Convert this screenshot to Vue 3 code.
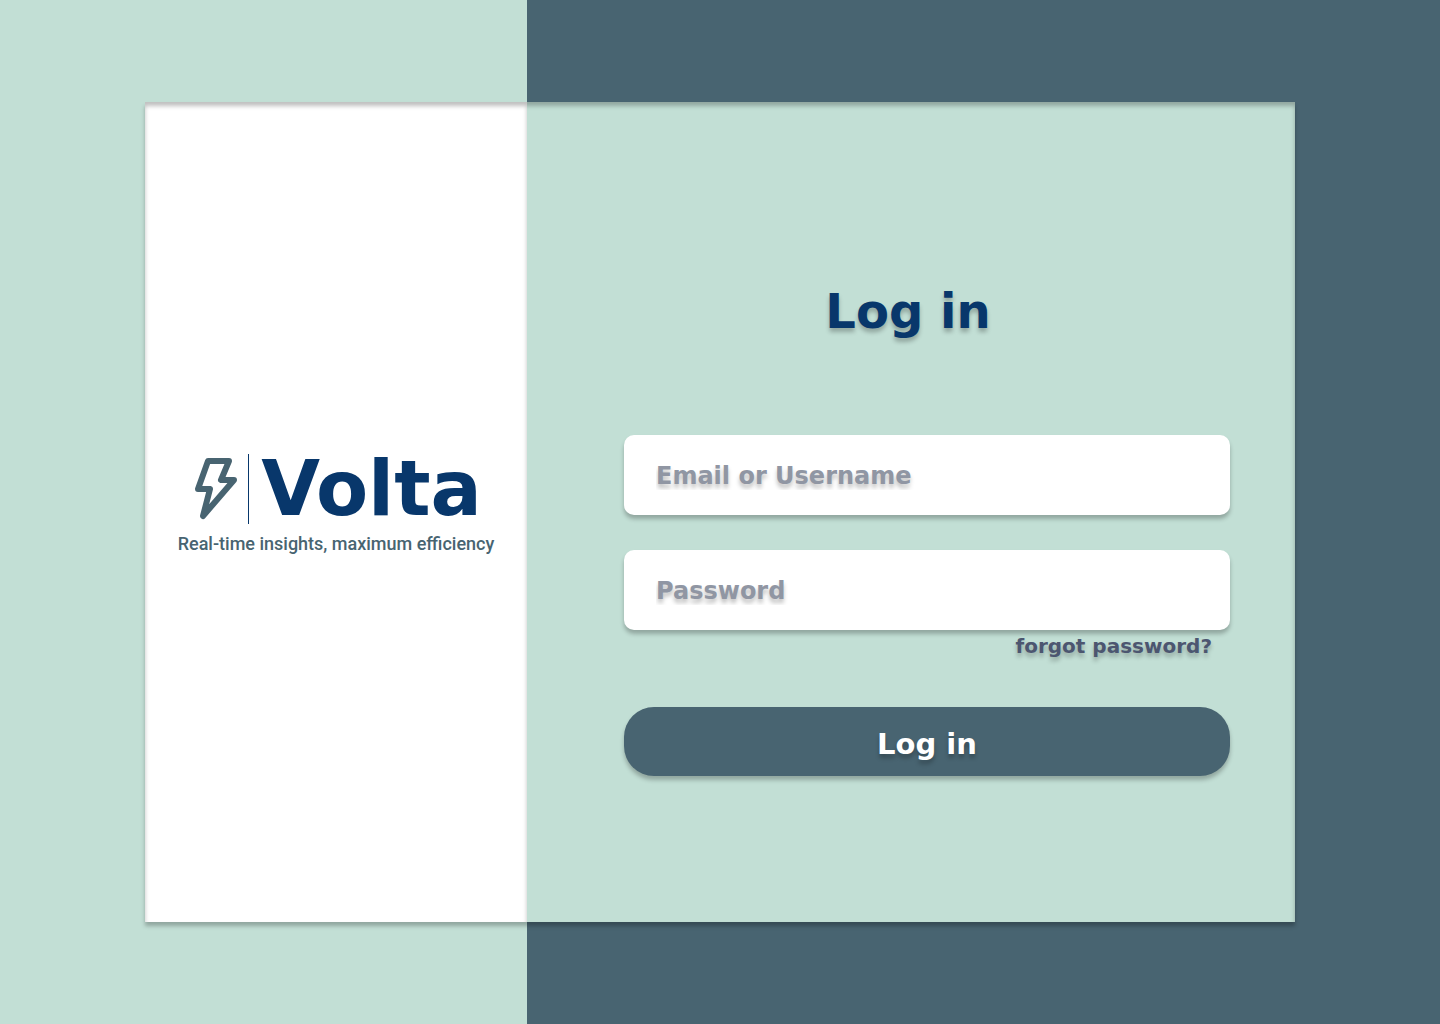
<script setup>
import { ref } from 'vue'

const username = ref('')
const password = ref('')
</script>

<template>
  <main class="page">
    <div class="card">
      <section class="brand">
        <div class="logo">
          <svg class="bolt" viewBox="0 0 44 64" aria-hidden="true">
            <path d="M14 4H35L27 23H40L9 59L16 32H4Z" />
          </svg>
          <span class="divider"></span>
          <span class="name">Volta</span>
        </div>
        <p class="tagline">Real-time insights, maximum efficiency</p>
      </section>

      <form class="login" @submit.prevent>
        <h1 class="title">Log in</h1>
        <div class="fields">
          <input v-model="username" class="field" type="text" placeholder="Email or Username" aria-label="Email or Username" autocomplete="username" />
          <input v-model="password" class="field" type="password" placeholder="Password" aria-label="Password" autocomplete="current-password" />
        </div>
        <a class="forgot" href="#">forgot password?</a>
        <button class="submit" type="submit">Log in</button>
      </form>
    </div>
  </main>
</template>

<style>
body {
  margin: 0;
}
</style>

<style scoped>
.page {
  --mint: #c2dfd5;
  --slate: #486471;
  --navy: #08376b;
  --gutter: 145px;
  --brand: 382px;
  --shade: 0 4px 4px rgba(0, 0, 0, 0.25);
  box-sizing: border-box;
  display: grid;
  min-height: 100vh;
  padding: 102px var(--gutter);
  background: linear-gradient(
    to right,
    var(--mint) calc(var(--gutter) + var(--brand)),
    var(--slate) calc(var(--gutter) + var(--brand))
  );
  font-family: "DejaVu Sans", sans-serif;
  font-weight: 700;
}

.card {
  display: grid;
  grid-template-columns: var(--brand) 1fr;
  background: var(--mint);
  box-shadow: var(--shade), inset 0 4px 4px rgba(0, 0, 0, 0.25);
}

.brand {
  display: flex;
  flex-direction: column;
  align-items: center;
  justify-content: center;
  padding-bottom: 14px;
  background: #fff;
  box-shadow: inset 0 4px 4px rgba(0, 0, 0, 0.25);
}

.logo {
  display: flex;
  align-items: center;
  height: 70px;
  padding-left: 4px;
}

.bolt {
  width: 44px;
  height: 64px;
  fill: none;
  stroke: var(--slate);
  stroke-width: 6;
  stroke-linejoin: round;
}

.divider {
  width: 1px;
  height: 70px;
  margin: 0 12px 0 10px;
  background: var(--navy);
}

.name {
  color: var(--navy);
  font-size: 76px;
  line-height: 70px;
}

.tagline {
  margin: 8px 0 0;
  color: var(--slate);
  font-family: Roboto, sans-serif;
  font-size: 18px;
  font-weight: 500;
  line-height: 24px;
  white-space: nowrap;
}

.login {
  display: flex;
  flex-direction: column;
  justify-content: center;
  padding: 34px 65px 0 97px;
}

.title {
  margin: 0 38px 96px 0;
  color: var(--navy);
  font-size: 48px;
  line-height: 56px;
  text-align: center;
  text-shadow: var(--shade);
}

.fields {
  display: flex;
  flex-direction: column;
  gap: 35px;
}

.field {
  box-sizing: border-box;
  width: 100%;
  height: 80px;
  padding: 2px 32px 0;
  border: 0;
  border-radius: 10px;
  background: #fff;
  box-shadow: var(--shade);
  color: #4c5670;
  font: inherit;
  font-size: 24px;
  text-shadow: var(--shade);
}

.field::placeholder {
  color: #9096a3;
  opacity: 1;
}

.forgot {
  align-self: flex-end;
  margin: 0 18px 45px 0;
  color: #4c5670;
  font-size: 20px;
  line-height: 32px;
  text-decoration: none;
  text-shadow: var(--shade);
}

.submit {
  height: 69px;
  padding: 6px 0 0;
  border: 0;
  border-radius: 30px;
  background: var(--slate);
  box-shadow: var(--shade);
  color: #fff;
  font: inherit;
  font-size: 29px;
  text-shadow: var(--shade);
  cursor: pointer;
}
</style>
